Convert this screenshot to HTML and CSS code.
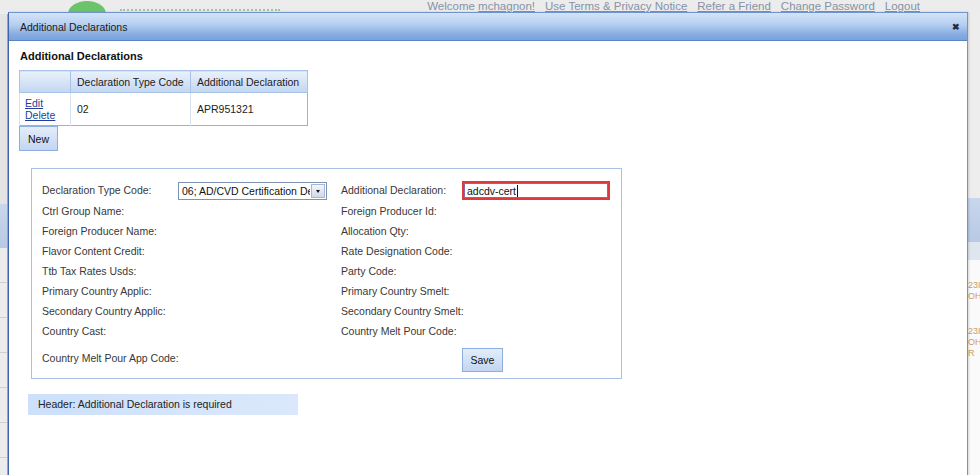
FILE: index.html
```html
<!DOCTYPE html>
<html>
<head>
<meta charset="utf-8">
<title>Additional Declarations</title>
<link rel="stylesheet" href="styles.css">
</head>
<body>
<div class="page">
  <header class="topbar">
    <div class="logo"><span class="logo-dot"></span><span class="logo-text">&nbsp;</span></div>
    <nav class="toplinks">
      <span class="welcome">Welcome <a href="#">mchagnon!</a></span>
      <a href="#">Use Terms &amp; Privacy Notice</a>
      <a href="#">Refer a Friend</a>
      <a href="#">Change Password</a>
      <a href="#">Logout</a>
    </nav>
  </header>
  <div class="page-main">
    <aside class="strip strip-left">
      <div class="frag frag-a"></div>
      <div class="frag frag-band"></div>
      <div class="frag frag-rows"></div>
    </aside>
    <div class="page-center"></div>
    <aside class="strip strip-right">
      <div class="frag frag-a"></div>
      <div class="frag frag-band"></div>
      <div class="frag frag-head"></div>
      <div class="frag frag-white">
        <span class="code">23I<br>OH</span>
        <span class="code code2">23I<br>OH<br>R</span>
      </div>
    </aside>
  </div>
</div>

<div class="dialog">
  <div class="titlebar">
    <span class="title">Additional Declarations</span>
    <span class="close">&#x2716;</span>
  </div>
  <div class="dialog-body">
    <h2 class="heading">Additional Declarations</h2>
    <table class="grid-table">
      <thead>
        <tr>
          <th class="c1"></th>
          <th class="c2">Declaration Type Code</th>
          <th class="c3">Additional Declaration</th>
        </tr>
      </thead>
      <tbody>
        <tr>
          <td class="actions"><a href="#">Edit</a><br><a href="#">Delete</a></td>
          <td>02</td>
          <td>APR951321</td>
        </tr>
      </tbody>
    </table>
    <button class="btn btn-new">New</button>

    <div class="formbox">
      <div class="form-grid">
        <label class="lbl">Declaration Type Code:</label>
        <div class="select">
          <span class="select-text">06; AD/CVD Certification De</span>
          <span class="select-btn"><span class="tri"></span></span>
        </div>
        <label class="lbl lbl-r">Additional Declaration:</label>
        <div class="input"><span class="input-text">adcdv-cert</span><span class="caret"></span></div>

        <label class="lbl">Ctrl Group Name:</label><span></span>
        <label class="lbl lbl-r">Foreign Producer Id:</label><span></span>

        <label class="lbl">Foreign Producer Name:</label><span></span>
        <label class="lbl lbl-r">Allocation Qty:</label><span></span>

        <label class="lbl">Flavor Content Credit:</label><span></span>
        <label class="lbl lbl-r">Rate Designation Code:</label><span></span>

        <label class="lbl">Ttb Tax Rates Usds:</label><span></span>
        <label class="lbl lbl-r">Party Code:</label><span></span>

        <label class="lbl">Primary Country Applic:</label><span></span>
        <label class="lbl lbl-r">Primary Country Smelt:</label><span></span>

        <label class="lbl">Secondary Country Applic:</label><span></span>
        <label class="lbl lbl-r">Secondary Country Smelt:</label><span></span>

        <label class="lbl">Country Cast:</label><span></span>
        <label class="lbl lbl-r">Country Melt Pour Code:</label><span></span>

        <label class="lbl">Country Melt Pour App Code:</label><span></span>
        <span></span>
        <div><button class="btn btn-save">Save</button></div>
      </div>
    </div>

    <div class="message">Header: Additional Declaration is required</div>
  </div>
</div>
</body>
</html>
```

FILE: styles.css
```css
* { box-sizing: border-box; }
html, body {
  margin: 0;
  padding: 0;
  width: 980px;
  height: 475px;
  overflow: hidden;
}
body {
  font-family: "Liberation Sans", Arial, sans-serif;
  background: #e6e6e6;
  position: relative;
}

/* ---------- background page ---------- */
.page {
  width: 980px;
  height: 475px;
  display: flex;
  flex-direction: column;
}
.topbar {
  height: 14px;
  background: #ececec;
  display: flex;
  justify-content: space-between;
  align-items: flex-start;
  position: relative;
}
.logo {
  display: flex;
  align-items: flex-start;
  padding-left: 68px;
}
.logo-dot {
  width: 38px;
  height: 26px;
  border-radius: 50%;
  background: #6cc46a;
  margin-top: 1px;
}
.logo-text {
  width: 160px;
  height: 3px;
  margin: 9px 0 0 14px;
  border-top: 2px dotted #9cc79c;
}
.toplinks {
  display: flex;
  gap: 10px;
  padding-right: 60px;
  font-size: 11.5px;
  line-height: 13px;
  color: #8792a4;
}
.toplinks a {
  color: #8792a4;
  text-decoration: underline;
}
.page-main {
  flex: 1;
  display: flex;
}
.strip {
  width: 8px;
  background: #e4e4e4;
  display: flex;
  flex-direction: column;
}
.strip-left { border-right: 1px solid #9aa8bd; }
.page-center { flex: 1; }
.strip-right { width: 12px; background: #ededed; }
.frag-a { height: 184px; }
.strip-left .frag-a { height: 190px; }
.frag-band {
  height: 44px;
  background: linear-gradient(#c9d7ec, #b7c9e4);
}
.frag-head {
  height: 18px;
  background: #dfe6f0;
}
.frag-rows {
  flex: 1;
  background: repeating-linear-gradient(#ececec 0 34px, #cfcfcf 34px 35px);
}
.frag-white {
  flex: 1;
  background: #fafafa;
  display: flex;
  flex-direction: column;
  padding-top: 20px;
  gap: 24px;
  font-size: 9px;
  line-height: 11px;
  color: #d59a5a;
  overflow: hidden;
}

/* ---------- dialog ---------- */
.dialog {
  position: absolute;
  left: 8px;
  top: 12px;
  width: 960px;
  height: 475px;
  background: #ffffff;
  border: 1px solid #6f93cf;
  border-left-color: #3f63ad;
  box-shadow: 1px 0 2px rgba(0,0,0,0.15);
}
.titlebar {
  height: 28px;
  display: flex;
  align-items: center;
  justify-content: space-between;
  padding: 0 7px 0 11px;
  background: linear-gradient(#d4e4f9 0%, #b3cdf0 45%, #86abe0 80%, #7aa2dc 100%);
  border-bottom: 1px solid #5b82c4;
}
.title {
  font-size: 10.5px;
  color: #1b1b1b;
}
.close {
  font-size: 9px;
  color: #1e2c44;
  font-weight: bold;
}
.dialog-body {
  padding: 0 10px;
}
.heading {
  margin: 8px 0 7px 1px;
  font-size: 11px;
  line-height: 14px;
  font-weight: bold;
  color: #111;
}

/* table */
.grid-table {
  border-collapse: collapse;
  border: 1px solid #93b2e2;
  font-size: 10.5px;
  color: #1c1c1c;
}
.grid-table th {
  height: 22px;
  padding: 0 6px;
  text-align: left;
  font-weight: normal;
  background: linear-gradient(#eaf1fb, #c2d6f2);
  border: 1px solid #a9c2e8;
  white-space: nowrap;
}
.grid-table th.c1 { width: 51px; }
.grid-table th.c2 { width: 120px; }
.grid-table th.c3 { width: 117px; }
.grid-table td {
  height: 33px;
  padding: 0 6px;
  border-left: 1px solid #d6e1f1;
  background: #fff;
}
.grid-table td.actions {
  padding: 0 5px;
  line-height: 12px;
}
.grid-table a {
  color: #233f9c;
  text-decoration: underline;
}

.btn {
  font-family: "Liberation Sans", Arial, sans-serif;
  font-size: 10.5px;
  color: #111;
  background: linear-gradient(#e4edfa, #c2d5f1);
  border: 1px solid #8eaee0;
  padding: 0;
  cursor: pointer;
}
.btn-new {
  display: block;
  width: 39px;
  height: 25px;
}

/* form box */
.formbox {
  margin: 17px 0 0 12px;
  width: 591px;
  height: 211px;
  border: 1px solid #a9c1e6;
  padding: 10px 0 3px 10px;
}
.form-grid {
  display: grid;
  grid-template-columns: 136px 149px 135px 148px;
  grid-template-rows: 22px repeat(7, 20px) 34px;
  align-items: center;
}
.lbl {
  font-size: 10.5px;
  color: #383838;
  white-space: nowrap;
}
.lbl-r { padding-left: 14px; }

.select {
  height: 18px;
  display: flex;
  align-items: stretch;
  border: 1px solid #7f93b4;
  background: #fff;
  margin-top: 2px;
  overflow: hidden;
}
.select-text {
  flex: 1;
  min-width: 0;
  overflow: hidden;
  white-space: nowrap;
  text-overflow: clip;
  font-size: 10.5px;
  line-height: 16px;
  padding-left: 3px;
  color: #111;
}
.select-btn {
  width: 14px;
  flex: none;
  margin: 1px;
  background: linear-gradient(#f3f6fb, #cdd9ea);
  border: 1px solid #a6b8d4;
  display: flex;
  align-items: center;
  justify-content: center;
}
.tri {
  width: 0;
  height: 0;
  border-left: 2.5px solid transparent;
  border-right: 2.5px solid transparent;
  border-top: 3px solid #111;
}

.input {
  height: 19px;
  border: 2px solid #dd3a40;
  box-shadow: inset 0 0 0 1px #8a6a9c;
  display: flex;
  align-items: center;
  padding-left: 3px;
  font-size: 10.5px;
  color: #111;
  margin-top: 1px;
  width: 148px;
}
.caret {
  width: 1px;
  height: 12px;
  background: #111;
  margin-left: 1px;
}

.btn-save {
  width: 41px;
  height: 24px;
  margin-top: 4px;
}

.message {
  margin: 15px 0 0 9px;
  width: 270px;
  height: 21px;
  background: linear-gradient(90deg, #cde0fa, #dbe8fb);
  font-size: 10.5px;
  line-height: 21px;
  padding-left: 10px;
  color: #222;
}
```
